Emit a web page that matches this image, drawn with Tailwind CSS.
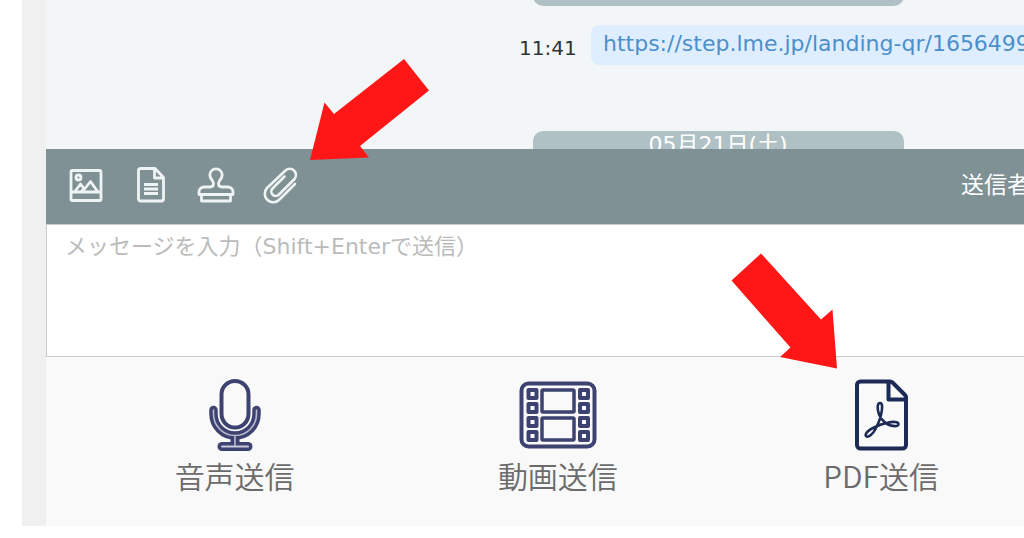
<!DOCTYPE html>
<html lang="ja">
<head>
  <meta charset="UTF-8">
  <meta name="viewport" content="width=device-width, initial-scale=1.0">
  <title>メッセージ送信</title>
  <script src="https://cdn.jsdelivr.net/npm/@tailwindcss/browser@4"></script>
</head>
<body class="bg-white h-screen overflow-hidden relative font-['DejaVu_Sans','Noto_Sans_CJK_JP',sans-serif]">
  <div class="h-full pl-[22px] pb-3 overflow-hidden">
    <div class="h-full min-w-[1368px] border-l-[24px] border-[#f0f0f0] flex flex-col">

      <!-- Chat log -->
      <main class="flex-1 min-h-0 overflow-hidden bg-[#f2f6f7] flex flex-col justify-end">
        <div class="shrink-0 self-center w-[371px] h-[30px] leading-7 rounded-[10px] bg-[#b0c1c5] text-white text-[22px] text-center">05月20日(金)</div>
        <div class="shrink-0 flex items-start mt-[19px] mb-[60px] pl-[473px]">
          <time class="w-[72px] text-[20px] leading-[46px] text-[#333]">11:41</time>
          <div class="flex-1 h-10 rounded-lg bg-[#dfeeff] px-3">
            <a href="#" class="text-[22px] leading-[38px] text-[#4b8fcb] whitespace-nowrap">https://step.lme.jp/landing-qr/1656499</a>
          </div>
        </div>
        <div class="shrink-0 self-center w-[371px] h-[30px] leading-7 -mb-3 rounded-[10px] bg-[#b0c1c5] text-white text-[22px] text-center">05月21日(土)</div>
      </main>

      <!-- Toolbar -->
      <div class="h-[75px] shrink-0 bg-[#7f9194] text-[#eef3f4] flex items-center pl-[22px] pb-1 gap-[29px]">
        <button type="button" aria-label="画像" class="size-9">
          <svg viewBox="0 0 36 36" class="size-9" fill="none" stroke="currentColor" stroke-width="2.8" stroke-linejoin="round">
            <rect x="3" y="3.500" width="30" height="30" rx="1.500"/>
            <circle cx="10.500" cy="10.500" r="2.500"/>
            <path d="M3 25h30M6.500 25l6-8 4 5 6-7.500 7.500 10.500M13 25l3.500-4"/>
          </svg>
        </button>
        <button type="button" aria-label="テンプレート" class="size-9">
          <svg viewBox="0 0 36 36" class="size-9" fill="none" stroke="currentColor" stroke-width="2.8" stroke-linejoin="round">
            <path d="M7.500 1.500h14.500l8.500 9v21.500a2 2 0 0 1-2 2h-21a2 2 0 0 1-2-2v-28.500a2 2 0 0 1 2-2zM21.500 1.500v9.500h9M11 17.500h14M11 22h14M11 26.500h14"/>
          </svg>
        </button>
        <button type="button" aria-label="スタンプ" class="size-9">
          <svg viewBox="0 0 36 36" class="size-9 overflow-visible" fill="none" stroke="currentColor" stroke-width="2.8" stroke-linejoin="round">
            <path d="M1 27.500v-2.500a5 5 0 0 1 5-5h6q3.500 0 3.500-3.500c0-3-3.700-4.500-3.700-8.500a6.200 6.200 0 0 1 12.400 0c0 4-3.700 5.500-3.700 8.500q0 3.500 3.500 3.500h6a5 5 0 0 1 5 5v2.500zM3.500 27.500v6.500h29v-6.500"/>
          </svg>
        </button>
        <button type="button" aria-label="ファイル添付" class="size-9">
          <svg viewBox="0 0 36 36" class="size-9 overflow-visible" fill="none" stroke="currentColor" stroke-width="2.6" stroke-linecap="round">
            <path d="M32 17l-15.500 15.500a8 8 0 0 1-12.500-11.500l18.500-17.500a6.200 6.200 0 0 1 9 8.500l-15.500 15.500a4.300 4.300 0 0 1-6.500-6l12-12"/>
          </svg>
        </button>
        <div class="ml-auto w-[429px] text-[23px] leading-8 text-white">送信者</div>
      </div>

      <!-- Message box -->
      <textarea aria-label="メッセージ" placeholder="メッセージを入力（Shift+Enterで送信）" class="block h-[133px] w-full shrink-0 resize-none bg-white border border-[#c5cccd] px-[18px] py-[6px] text-[22px] leading-8 text-[#333] placeholder:text-[#bbb] outline-none"></textarea>

      <!-- Attachment types -->
      <div class="shrink-0 h-[169px] bg-[#f9f9f9] grid grid-cols-4 pl-[27px] pr-6 pt-[19px] text-[30px] leading-9 font-[350] text-[#6b6b6b] font-['Noto_Sans_CJK_JP',sans-serif]">
        <button type="button" class="flex flex-col items-center gap-[5px] self-start">
          <svg viewBox="0 0 54 76" class="w-[54px] h-[76px]" fill="none" stroke="#3d4270" stroke-width="4" stroke-linecap="round">
            <rect x="13.500" y="5" width="27" height="46.500" rx="13.500"/>
            <path stroke-width="8.500" d="M5.500 34v4a21.500 21.500 0 0 0 43 0v-4"/>
            <path stroke-width="9" stroke-linecap="butt" d="M27 61v7"/>
            <path stroke-width="9" d="M14 70.500h26"/>
            <path stroke="#b9bbcc" stroke-width="1.600" d="M5.500 34v4a21.500 21.500 0 0 0 43 0v-4M27 60v10"/>
            <path stroke="#c9cad8" stroke-width="2" d="M14 70.500h26"/>
          </svg>
          <span>音声送信</span>
        </button>
        <button type="button" class="flex flex-col items-center gap-[5px] self-start">
          <svg viewBox="0 0 80 76" class="w-20 h-[76px]" fill="none" stroke="#3d4270" stroke-width="4" stroke-linejoin="round">
            <rect x="3.500" y="7.500" width="73" height="63" rx="7"/>
            <rect x="24" y="14" width="32" height="22" rx="1" stroke-width="3.500"/>
            <rect x="24" y="42" width="32" height="22" rx="1" stroke-width="3.500"/>
            <path d="M10.500 14h8v8h-8zM10.500 28h8v8h-8zM10.500 42h8v8h-8zM10.500 56h8v8h-8zM62 14h8v8h-8zM62 28h8v8h-8zM62 42h8v8h-8zM62 56h8v8h-8z"/>
          </svg>
          <span>動画送信</span>
        </button>
        <button type="button" class="flex flex-col items-center gap-[5px] self-start">
          <svg viewBox="0 0 56 76" class="w-14 h-[76px]" fill="none" stroke="#1d2a55" stroke-width="4" stroke-linejoin="round">
            <path d="M7.500 5.500h29.500q1.500 0 2.500 1l12.500 12.500q1 1 1 2.500v47.500a3.500 3.500 0 0 1-3.500 3.500h-42a3.500 3.500 0 0 1-3.500-3.500v-60a3.500 3.500 0 0 1 3.500-3.500zM35.500 6v17.500h17"/>
            <path stroke-width="2.600" d="M27 27c-2.800 0-3 5.500-1 11.500 2 4.500 5.500 8 9 10 4 2 10 2.500 10.500-.3.300-2.800-6-2.700-11-1.500-5 1-8 2-12.500 4.300-6 2.500-10.500 6.500-9 9 2 2.500 7-2 9.500-7 2-4 4.500-9 5.500-14 1.500-6.500 1.800-12-1-12z"/>
          </svg>
          <span>PDF送信</span>
        </button>
      </div>
    </div>
  </div>

  <!-- Guide arrows -->
  <svg viewBox="0 0 120 102" class="absolute left-[310px] top-[59px] w-[120px] h-[102px] pointer-events-none" fill="#ff1717" aria-hidden="true">
    <path d="M94 0l25 31.500-69 55.500 9 11.500-59 2.500 14.500-57.500 9.500 11.500z"/>
  </svg>
  <svg viewBox="0 0 106 116" class="absolute left-[731px] top-[253px] w-[106px] h-[116px] pointer-events-none" fill="#ff1717" aria-hidden="true">
    <path d="M30 .5l60 66 11.500-10 4.500 59-57-11.500 10.500-9.500-59-67z"/>
  </svg>
</body>
</html>
